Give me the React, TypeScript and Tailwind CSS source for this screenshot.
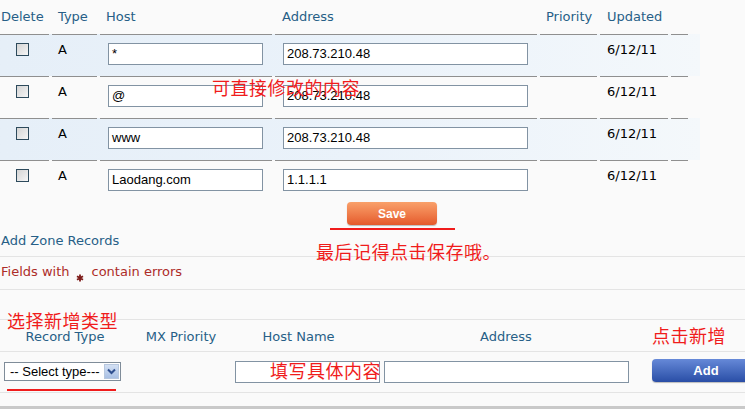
const cols = "grid grid-cols-[49px_45px_172px_262px_57px_68px_17px] gap-x-[3px]";

const records = [
  { host: "*", address: "208.73.210.48", tint: true },
  { host: "@", address: "208.73.210.48", tint: false },
  { host: "www", address: "208.73.210.48", tint: true },
  { host: "Laodang.com", address: "1.1.1.1", tint: false },
];

function Checkbox() {
  return (
    <div className="w-[13px] h-[13px] border border-[#2d4a5c] bg-gradient-to-br from-[#d4d4d4] to-[#f6f6f6]" />
  );
}

function TextBox({ value, width }: { value: string; width: string }) {
  return (
    <div
      className={`${width} shrink-0 h-[22px] border border-[#8293a3] bg-white px-[3px] flex items-center text-[13px] text-black font-['Liberation_Sans',Arial,sans-serif]`}
    >
      {value}
    </div>
  );
}

function Note({ text, className }: { text: string; className: string }) {
  return (
    <div
      className={`absolute text-[18px] leading-[18px] tracking-[0.5px] text-[#f01c1c] font-['Noto_Sans_CJK_SC',sans-serif] ${className}`}
    >
      {text}
    </div>
  );
}

export default function App() {
  return (
    <div className="relative w-[745px] h-[409px] overflow-hidden bg-[#fafafa] font-['DejaVu_Sans',Verdana,sans-serif] text-[13px] leading-[16px]">
      {/* records table */}
      <div className={`${cols} h-[34px] pt-[9px] text-[#275f87]`}>
        <div className="pl-[1px]">Delete</div>
        <div className="pl-[6px]">Type</div>
        <div className="pl-[6px]">Host</div>
        <div className="pl-[7px]">Address</div>
        <div className="pl-[6px]">Priority</div>
        <div className="pl-[7px]">Updated</div>
        <div />
      </div>
      {records.map((r, i) => (
        <div
          key={i}
          className={`${cols} w-[700px] h-[42px] ${
            r.tint ? "bg-gradient-to-r from-[#e6eff8] via-[#eaf2fa] to-[#f4f8fb]" : ""
          }`}
        >
          <div className="border-t border-[#8f8f8f] pt-[8px] pl-[16px]">
            <Checkbox />
          </div>
          <div className="border-t border-[#8f8f8f] pt-[7px] pl-[6px] text-black">A</div>
          <div className="border-t border-[#8f8f8f] pt-[8px] pl-[8px]">
            <TextBox value={r.host} width="w-[155px]" />
          </div>
          <div className="border-t border-[#8f8f8f] pt-[8px] pl-[8px]">
            <TextBox value={r.address} width="w-[245px]" />
          </div>
          <div className="border-t border-[#8f8f8f]" />
          <div className="border-t border-[#8f8f8f] pt-[7px] pl-[7px] text-black">6/12/11</div>
          <div className="border-t border-[#8f8f8f]" />
        </div>
      ))}

      {/* save */}
      <div className="h-[31px] pl-[347px]">
        <button className="w-[90px] h-[23px] rounded-[4px] bg-gradient-to-b from-[#f9a06a] to-[#e4592a] text-white font-bold text-[12px] font-['Liberation_Sans',Arial,sans-serif] shadow-[0_1px_1px_rgba(0,0,0,0.25)]">
          Save
        </button>
      </div>

      {/* add zone records */}
      <div className="h-[24px] border-b border-[#e4e4e4] pl-[1px] text-[#275f87]">Add Zone Records</div>
      <div className="h-[33px] border-b border-[#e4e4e4] pt-[7px] pl-[1px] flex items-start text-[#ad2c28]">
        <span>Fields with</span>
        <svg width="8" height="8" viewBox="0 0 8 8" className="ml-[6px] mr-[8px] mt-[10px]">
          <path d="M4 0.5 L4 7.5 M1 2.2 L7 5.8 M1 5.8 L7 2.2" stroke="#7c1a18" strokeWidth="1.8" />
        </svg>
        <span>contain errors</span>
      </div>
      <div className="h-[30px] border-b border-[#e4e4e4]" />
      <div className="h-[32px] border-b border-[#e4e4e4] pt-[9px] flex text-[#275f87]">
        <div className="w-[130px] text-center">Record Type</div>
        <div className="w-[102px] text-center">MX Priority</div>
        <div className="w-[133px] text-center">Host Name</div>
        <div className="w-[282px] text-center">Address</div>
      </div>
      <div className="h-[41px] border-b border-[#e4e4e4] pt-[9px] pl-[4px] flex items-start">
        <div className="shrink-0 mt-[1px] w-[117px] h-[19px] border border-[#7f8c99] bg-white flex items-center justify-between pl-[5px] pr-[1px] text-[13px] text-black font-['Liberation_Sans',Arial,sans-serif]">
          <span>-- Select type---</span>
          <span className="w-[15px] h-[15px] bg-gradient-to-b from-[#d3e0f4] to-[#a9c0e4] border border-[#b7c7de] flex items-center justify-center">
            <svg width="9" height="7" viewBox="0 0 9 7">
              <path d="M1 1.5 L4.5 5 L8 1.5" fill="none" stroke="#2f4f8f" strokeWidth="2" />
            </svg>
          </span>
        </div>
        <div className="shrink-0 ml-[114px]">
          <TextBox value="" width="w-[145px]" />
        </div>
        <div className="shrink-0 ml-[4px]">
          <TextBox value="" width="w-[245px]" />
        </div>
        <button className="shrink-0 ml-[23px] -mt-[2px] w-[100px] h-[23px] rounded-[4px] bg-gradient-to-b from-[#6689d8] to-[#2a4ea6] text-white font-bold text-[13px] font-['Liberation_Sans',Arial,sans-serif] pl-[8px] shadow-[0_1px_1px_rgba(0,0,0,0.25)]">
          Add
        </button>
      </div>
      <div className="h-[13px]" />
      <div className="h-[3px] bg-[#c9c9c9]" />

      {/* red annotations */}
      <Note text="可直接修改的内容" className="left-[212px] top-[78px]" />
      <Note text="最后记得点击保存哦。" className="left-[316px] top-[242px]" />
      <Note text="选择新增类型" className="left-[7px] top-[311px]" />
      <Note text="点击新增" className="left-[652px] top-[326px]" />
      <Note text="填写具体内容" className="left-[270px] top-[361px]" />
      <div className="absolute left-[330px] top-[228px] w-[125px] h-[2px] bg-[#f01c1c]" />
      <div className="absolute left-[7px] top-[389px] w-[109px] h-[2px] bg-[#f01c1c]" />
    </div>
  );
}
